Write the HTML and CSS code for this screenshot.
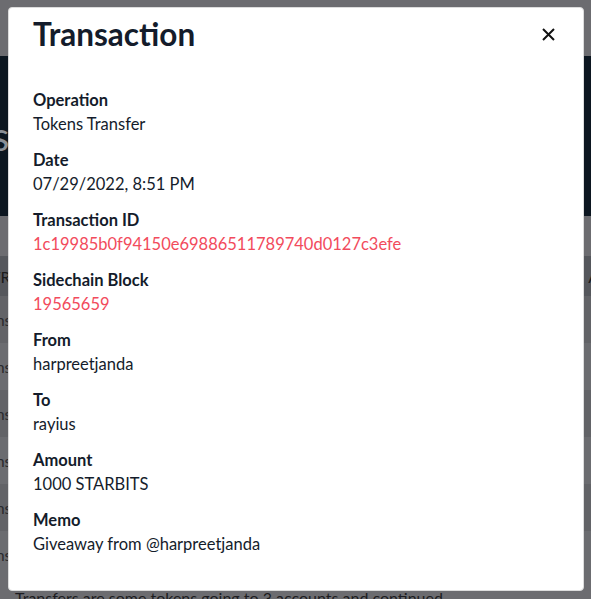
FILE: index.html
```html
<!DOCTYPE html>
<html lang="en">
<head>
<meta charset="utf-8">
<title>Transaction</title>
<link rel="stylesheet" href="styles.css">
</head>
<body>
<div class="page">
  <div class="topbar"></div>
  <div class="hero"><span class="hero-title">Tokens</span></div>
  <div class="spacer"></div>
  <div class="table">
    <div class="thead"><span class="cut head-cut">TRA</span><span class="cut-r">A</span></div>
    <div class="row odd"><span class="cut">Tokens</span></div>
    <div class="row"><span class="cut">Tokens</span></div>
    <div class="row odd"><span class="cut">Tokens</span></div>
    <div class="row"><span class="cut">Tokens</span></div>
    <div class="row odd"><span class="cut">Tokens</span></div>
    <div class="row"><span class="cut">Tokens</span></div>
  </div>
  <div class="footer-text">Transfers are some tokens going to 3 accounts and continued</div>
</div>

<div class="modal">
  <div class="modal-header">
    <h1 class="modal-title">Transaction</h1>
    <button class="close" aria-label="Close">
      <svg width="13" height="13" viewBox="0 0 13 13"><path d="M1 1L12 12M12 1L1 12" stroke="#111" stroke-width="2" fill="none"/></svg>
    </button>
  </div>
  <div class="modal-body">
    <div class="field"><div class="label">Operation</div><div class="value">Tokens Transfer</div></div>
    <div class="field"><div class="label">Date</div><div class="value">07/29/2022, 8:51 PM</div></div>
    <div class="field"><div class="label">Transaction ID</div><div class="value link">1c19985b0f94150e69886511789740d0127c3efe</div></div>
    <div class="field"><div class="label">Sidechain Block</div><div class="value link">19565659</div></div>
    <div class="field"><div class="label">From</div><div class="value">harpreetjanda</div></div>
    <div class="field"><div class="label">To</div><div class="value">rayius</div></div>
    <div class="field"><div class="label">Amount</div><div class="value">1000 STARBITS</div></div>
    <div class="field"><div class="label">Memo</div><div class="value">Giveaway from @harpreetjanda</div></div>
  </div>
</div>
</body>
</html>
```

FILE: styles.css
```css
html, body {
  margin: 0;
  padding: 0;
}
body {
  font-family: Lato, "Noto Sans", sans-serif;
  background: #6c6c70;
  overflow: hidden;
}
.page {
  width: 591px;
  height: 599px;
  display: flex;
  flex-direction: column;
  overflow: hidden;
}
.page > * {
  flex-shrink: 0;
}
.topbar {
  height: 56px;
  background: #6c6c70;
}
.hero {
  height: 160px;
  background: #0c1620;
  display: flex;
  align-items: center;
  overflow: hidden;
}
.hero-title {
  color: #8a8f96;
  font-size: 40px;
  margin-left: -112px;
}
.spacer {
  height: 40px;
  background: #6c6c70;
}
.table {
  display: flex;
  flex-direction: column;
}
.thead {
  height: 40px;
  background: #55575c;
  display: flex;
  align-items: center;
  justify-content: space-between;
  overflow: hidden;
  color: #1b1b1b;
  font-size: 16px;
}
.row {
  height: 47px;
  background: #6b6c70;
  display: flex;
  align-items: center;
  overflow: hidden;
  color: #2a2a2e;
  font-size: 16px;
}
.row.odd {
  background: #626367;
}
.cut {
  margin-left: -37px;
  white-space: nowrap;
}
.head-cut {
  margin-left: -9px;
}
.cut-r {
  margin-right: -8px;
}
.footer-text {
  padding: 10px 0 0 15px;
  color: #1c1c20;
  font-size: 16px;
  white-space: nowrap;
}
.modal {
  position: fixed;
  left: 8px;
  top: 7px;
  width: 574px;
  height: 582px;
  background: #fff;
  border: 1px solid #dcdcdc;
  border-radius: 4px;
  color: #141c2b;
}
.modal-header {
  display: flex;
  justify-content: space-between;
  align-items: center;
  padding: 10px 24px 0 24px;
}
.modal-title {
  margin: 0;
  font-size: 31.5px;
  font-weight: 700;
  line-height: 32px;
}
.close {
  border: 0;
  background: transparent;
  padding: 0;
  width: 13px;
  height: 13px;
  margin-right: 4px;
  display: flex;
}
.modal-body {
  padding: 38px 24px 0 24px;
  display: flex;
  flex-direction: column;
  gap: 12px;
}
.label {
  font-weight: 700;
  font-size: 16.5px;
  line-height: 24px;
}
.value {
  font-size: 16.5px;
  line-height: 24px;
}
.value.link {
  color: #f24b5c;
}
```
